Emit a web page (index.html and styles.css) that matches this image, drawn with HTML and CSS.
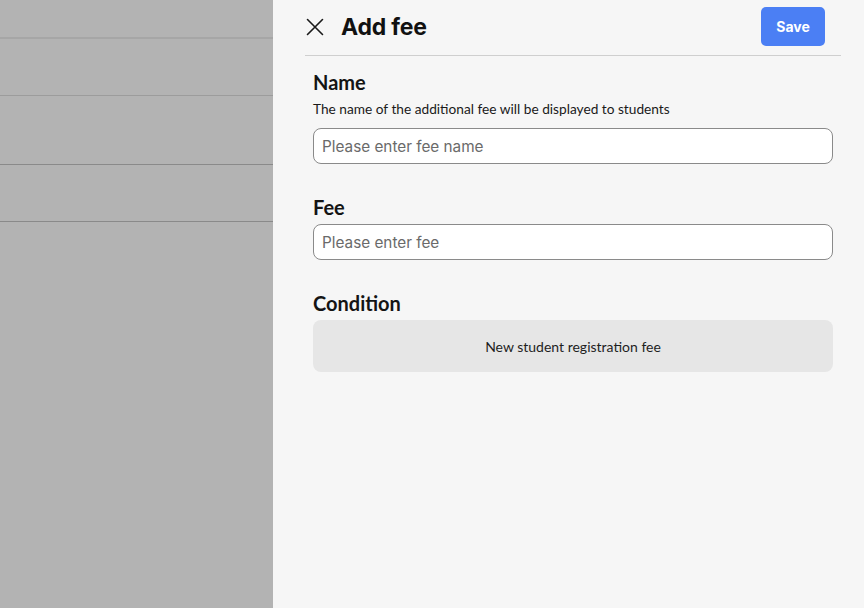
FILE: index.html
```html
<!DOCTYPE html>
<html lang="en">
<head>
<meta charset="utf-8">
<title>Add fee</title>
<link rel="stylesheet" href="styles.css">
</head>
<body>
<div class="page">
  <div class="backdrop">
    <div class="bg-row r1"></div>
    <div class="bg-row r2"></div>
    <div class="bg-row r3"></div>
    <div class="bg-row r4"></div>
  </div>
  <aside class="panel">
    <header class="panel-header">
      <button class="close" aria-label="Close">
        <svg width="18" height="18" viewBox="0 0 18 18"><path d="M1.5 1.5 L16.5 16.5 M16.5 1.5 L1.5 16.5" stroke="#1a1a1a" stroke-width="1.6" fill="none" stroke-linecap="round"/></svg>
      </button>
      <h1 class="title">Add fee</h1>
      <button class="save">Save</button>
    </header>
    <div class="form">
      <section class="field">
        <h2 class="label">Name</h2>
        <p class="hint">The name of the additional fee will be displayed to students</p>
        <input class="input" type="text" placeholder="Please enter fee name">
      </section>
      <section class="field">
        <h2 class="label">Fee</h2>
        <input class="input" type="text" placeholder="Please enter fee">
      </section>
      <section class="field">
        <h2 class="label">Condition</h2>
        <div class="condition">New student registration fee</div>
      </section>
    </div>
  </aside>
</div>
</body>
</html>
```
FILE: styles.css
```css
html, body {
  margin: 0;
  padding: 0;
  height: 100%;
}
body {
  font-family: "Lato", "Inter", sans-serif;
  background: #f6f6f6;
  color: #141414;
}
.page {
  display: flex;
  height: 608px;
  overflow: hidden;
}
.backdrop {
  width: 273px;
  flex: none;
  background: #b3b3b3;
  display: flex;
  flex-direction: column;
}
.bg-row {
  box-sizing: border-box;
}
.r1 { height: 39px; border-bottom: 2px solid #a6a6a6; }
.r2 { height: 57px; border-bottom: 1px solid #9c9c9c; }
.r3 { height: 69px; border-bottom: 1px solid #8a8a8a; }
.r4 { height: 57px; border-bottom: 1px solid #8a8a8a; }

.panel {
  flex: 1;
  background: #f6f6f6;
  padding: 0 23px 0 32px;
}
.panel-header {
  box-sizing: border-box;
  border-bottom: 1px solid #cfcfcf;
  display: flex;
  align-items: center;
  padding: 0 16px 0 1px;
  height: 56px;
}
.close {
  background: none;
  border: 0;
  padding: 0;
  width: 18px;
  height: 18px;
  display: flex;
  margin-top: -2px;
}
.title {
  font-family: "Inter", sans-serif;
  font-weight: 700;
  font-size: 23px;
  letter-spacing: -0.2px;
  margin: -1px 0 0 17px;
  color: #111;
}
.save {
  margin-left: auto;
  margin-top: -2px;
  width: 64px;
  height: 39px;
  border: 0;
  border-radius: 5px;
  background: #4b7ff4;
  color: #fff;
  font-family: "Inter", sans-serif;
  font-weight: 700;
  font-size: 14px;
}
.form {
  padding: 14px 8px 0 8px;
  display: flex;
  flex-direction: column;
  gap: 31px;
}
.field {
  display: flex;
  flex-direction: column;
}
.label {
  font-family: "Lato", sans-serif;
  font-weight: 700;
  font-size: 20px;
  line-height: 24px;
  margin: 0 0 5px;
  color: #141414;
}
.hint {
  font-size: 13.7px;
  line-height: 16px;
  margin: 2px 0 11px;
  color: #1a1a1a;
}
.input {
  box-sizing: border-box;
  height: 36px;
  width: 100%;
  border: 1px solid #8a8a8a;
  border-radius: 8px;
  background: #fff;
  padding: 0 8px;
  font-family: "Inter", sans-serif;
  font-size: 15.3px;
  color: #222;
  outline: none;
}
.input::placeholder {
  color: #6a6a6a;
}
.condition {
  height: 52px;
  border-radius: 8px;
  background: #e6e6e6;
  display: flex;
  align-items: center;
  justify-content: center;
  font-size: 14px;
  color: #1e1e1e;
}
```
